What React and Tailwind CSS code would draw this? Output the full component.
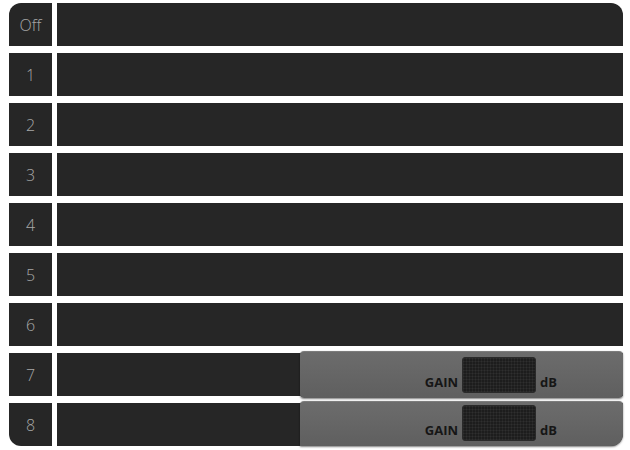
import React from "react";

const rows = ["Off", "1", "2", "3", "4", "5", "6", "7", "8"];

const GainPanel = ({ last }) => (
  <div
    className={`ml-auto w-[323px] -my-[2px] flex items-end justify-end pr-[66px] pb-[5px] border-t border-[#7c7c7c] bg-gradient-to-b from-[#6c6c6c] to-[#5f5f5f] shadow-[0_1px_2px_rgba(0,0,0,0.5)] ${
      last ? "rounded-tl-[4px] rounded-tr-[4px] rounded-br-[12px] mb-0" : "rounded-[4px]"
    }`}
  >
    <span className="mb-[4px] mr-[4px] text-[13px] leading-none font-bold text-[#161616] font-['Open_Sans',sans-serif]">
      GAIN
    </span>
    <div className="w-[74px] h-[36px] rounded-[3px] bg-[#1d1d1d] border border-[#2a2a2a] bg-[linear-gradient(rgba(255,255,255,0.04)_1px,transparent_1px),linear-gradient(90deg,rgba(255,255,255,0.04)_1px,transparent_1px)] bg-[size:3px_3px]" />
    <span className="mb-[4px] ml-[4px] text-[13px] leading-none font-bold text-[#161616] font-['Open_Sans',sans-serif]">
      dB
    </span>
  </div>
);

export default function App() {
  return (
    <div className="w-[630px] h-[450px] bg-white pt-[3px] pl-[9px] pr-[7px] flex flex-col gap-[7px] antialiased font-['Open_Sans',sans-serif]">
      {rows.map((label, i) => {
        const first = i === 0;
        const last = i === rows.length - 1;
        return (
          <div key={label} className="h-[43px] flex gap-[5px]">
            <div
              className={`w-[43px] flex items-center justify-center pt-[1px] bg-[#262626] text-[16px] font-light text-[#a8a8a8] ${
                first ? "rounded-tl-[12px]" : ""
              } ${last ? "rounded-bl-[12px]" : ""}`}
            >
              {label}
            </div>
            <div
              className={`flex-1 flex bg-[#262626] ${first ? "rounded-tr-[12px]" : ""} ${
                last ? "rounded-br-[12px]" : ""
              }`}
            >
              {i >= 7 && <GainPanel last={last} />}
            </div>
          </div>
        );
      })}
    </div>
  );
}
